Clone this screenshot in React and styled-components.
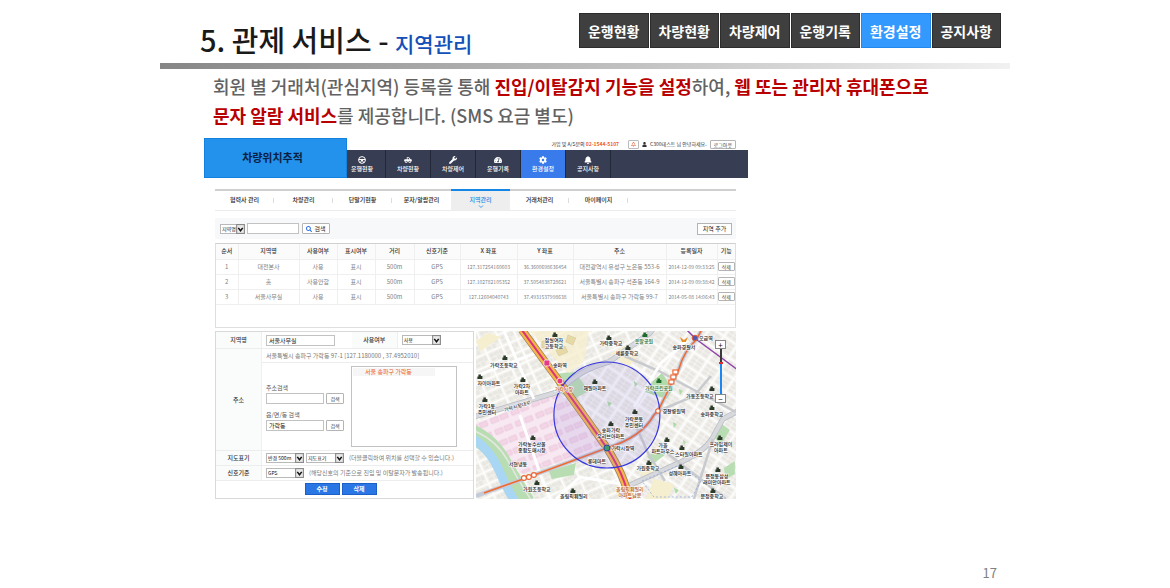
import React from "react";
import styled, { createGlobalStyle } from "styled-components";
import {
  FaBell,
  FaCog,
  FaRegBell,
  FaSearch,
  FaTachometerAlt,
  FaTruckPickup,
  FaUser,
  FaWrench,
} from "react-icons/fa";

const slideMenu = ["운행현황", "차량현황", "차량제어", "운행기록", "환경설정", "공지사항"];

const SteeringWheel = () => (
  <svg viewBox="0 0 16 16" fill="none" stroke="currentColor" strokeWidth="2">
    <circle cx="8" cy="8" r="6.8" />
    <circle cx="8" cy="8" r="1.6" fill="currentColor" />
    <path d="M1.5 7 L8 7 L14.5 7 M8 8 L4.5 13.5 M8 8 L11.5 13.5" />
  </svg>
);

const appMenu = [
  { label: "운행현황", icon: <SteeringWheel /> },
  { label: "차량현황", icon: <FaTruckPickup /> },
  { label: "차량제어", icon: <FaWrench /> },
  { label: "운행기록", icon: <FaTachometerAlt /> },
  { label: "환경설정", icon: <FaCog /> },
  { label: "공지사항", icon: <FaBell /> },
];

const tabs = [
  "협력사 관리",
  "차량관리",
  "단말기현황",
  "문자/알람관리",
  "지역관리",
  "거래처관리",
  "마이페이지",
];

const columns = [
  { label: "순서", width: 22 },
  { label: "지역명", width: 61 },
  { label: "사용여부", width: 38 },
  { label: "표시여부", width: 38 },
  { label: "거리", width: 39 },
  { label: "신호기준", width: 46 },
  { label: "X 좌표", width: 57 },
  { label: "Y 좌표", width: 56 },
  { label: "주소", width: 93 },
  { label: "등록일자", width: 51 },
  { label: "기능", width: 18 },
];

const rows = [
  ["1", "대전본사", "사용", "표시", "500m", "GPS", "127.317254160603", "36.3600698636454", "대전광역시 유성구 노은동 553-6", "2014-12-09 09:33:25"],
  ["2", "홈", "사용안함", "표시", "500m", "GPS", "127.102782105352", "37.5054838728621", "서울특별시 송파구 석촌동 164-9", "2014-12-09 09:38:42"],
  ["3", "서울사무실", "사용", "표시", "500m", "GPS", "127.12604040743", "37.4931537998638", "서울특별시 송파구 가락동 99-7", "2014-05-08 14:06:43"],
];

// coordinates and dates are set smaller than the rest of the row
const smallCells = [6, 7, 9];

const SelectBox = ({ id, label, width, children }) => (
  <SelectWrap $width={width}>
    <select id={id} aria-label={label}>
      {children}
    </select>
    <svg viewBox="0 0 8 9">
      <rect x="0.5" y="0.5" width="7" height="8" fill="#e9e9e9" stroke="#8b8b8b" />
      <path d="M2 3.5 L4 6 L6 3.5" fill="none" stroke="#111" strokeWidth="1.4" />
    </svg>
  </SelectWrap>
);

const places = [
  { x: 78, y: 11, icon: [79, 4], lines: ["잠실여자", "고등학교"] },
  { x: 28, y: 36, icon: [29, 27], lines: ["가락초등학교"] },
  { x: 84, y: 36, lines: ["송파역"] },
  { x: 13, y: 54, icon: [4, 46], lines: ["자이아파트"] },
  { x: 46, y: 57, icon: [47, 49], lines: ["가락2차", "아파트"] },
  { x: 119, y: 59, icon: [119, 51], lines: ["헤밀아파트"] },
  { x: 11, y: 77, icon: [9, 69], lines: ["가락1동", "주민센터"] },
  { x: 135, y: 14, icon: [133, 7], lines: ["가락중학교"] },
  { x: 168, y: 12, icon: [169, 4], lines: ["웃말공원"], color: "#1d6b2b" },
  { x: 151, y: 24, icon: [152, 17], lines: ["세륜중학교"] },
  { x: 208, y: 18, lines: ["송파경찰서"] },
  { x: 230, y: 9, lines: ["오금역"] },
  { x: 183, y: 59, icon: [183, 50], lines: ["가락근린공원"], color: "#1d6b2b" },
  { x: 198, y: 82, lines: ["경찰병원역"] },
  { x: 224, y: 67, icon: [236, 58], lines: ["가동초등학교"] },
  { x: 236, y: 85, icon: [236, 77], lines: ["송파중학교"] },
  { x: 158, y: 90, icon: [159, 81], lines: ["가락본동", "주민센터"] },
  { x: 135, y: 101, icon: [135, 93], lines: ["송파가락", "우리브아파트"] },
  { x: 147, y: 119, lines: ["가락시장역"] },
  { x: 56, y: 115, icon: [57, 107], lines: ["가락농수산물", "종합도매시장"] },
  { x: 42, y: 135, lines: ["서현냉동"] },
  { x: 121, y: 132, lines: ["롯데마트"] },
  { x: 61, y: 160, icon: [61, 152], lines: ["가원초등학교"] },
  { x: 98, y: 167, icon: [97, 160], lines: ["올림픽훼밀리"] },
  { x: 187, y: 116, icon: [191, 109], lines: ["가을", "파트하우스"] },
  { x: 213, y: 125, icon: [206, 117], lines: ["스타일아파트"] },
  { x: 172, y: 139, icon: [173, 132], lines: ["가원중학교"] },
  { x: 204, y: 144, icon: [205, 136], lines: ["성혜아파트"] },
  { x: 245, y: 115, icon: [244, 107], lines: ["프라임제이", "아파트"] },
  { x: 241, y: 147, icon: [242, 139], lines: ["문정동삼성", "래미안아파트"] },
  { x: 236, y: 167, icon: [237, 160], lines: ["문정중학교"] },
  { x: 154, y: 160, lines: ["올림픽훼밀리", "아파트남문"], color: "#b5590e" },
  { x: 88, y: 60, lines: ["가락시장"], color: "#b5590e" },
];

const AreaMap = () => (
  <svg viewBox="0 0 260 168" preserveAspectRatio="xMidYMid slice" role="img" aria-label="지역 지도">
    <defs>
      <pattern id="blocksA" width="17" height="12" patternUnits="userSpaceOnUse" patternTransform="rotate(-24)">
        <rect width="17" height="12" fill="#f3f2ed" />
        <path d="M0 .5H17M.5 0V12" stroke="#fff" strokeWidth="1.6" />
        <path d="M3 3h3v3h-3zM7.5 3h4v2.500h-4zM13 3h2.500v4h-2.500zM3 8h4v2h-4zM9 7.500h3v3h-3z" fill="#ebe9e4" stroke="#dddbd6" strokeWidth=".4" />
      </pattern>
      <pattern id="blocksB" width="16" height="15" patternUnits="userSpaceOnUse" patternTransform="rotate(34)">
        <rect width="16" height="15" fill="#f4f3ef" />
        <path d="M0 .5H16M.5 0V15" stroke="#fff" strokeWidth="1.6" />
        <path d="M3 3h4v2h-4zM9 3h5v2h-5zM3 7h4v2h-4zM9 7h5v2h-5zM3 11h4v2h-4zM9 11h5v2h-5z" fill="#edeae5" stroke="#dedbd6" strokeWidth=".4" />
      </pattern>
      <pattern id="market" width="22" height="12" patternUnits="userSpaceOnUse" patternTransform="rotate(-22)">
        <rect width="22" height="12" fill="#f7e8f1" />
        <path d="M2 3h8v5h-8zM12 3h8v5h-8z" fill="#f3d5e6" stroke="#e2bdd2" strokeWidth=".5" />
      </pattern>
    </defs>
    <rect width="260" height="168" fill="url(#blocksA)" />
    <path d="M128 28 L190 0 H260 V168 H150 L131 117 L100 55z" fill="url(#blocksB)" />
    <path d="M0 92 L84 62 L131 117 L46 143 L0 100z" fill="url(#market)" />
    <path d="M54 0 H113 L108 31 L92 42z" fill="#f6efcf" opacity=".8" />
    <path d="M66 10h5v7h-5zM80 19l9-4 3 6-9 4zM92 4l8 3-3 7-7-3z" fill="#e6d9a6" stroke="#cfc297" strokeWidth=".5" />
    <path d="M135 22 l14 -7 14 8 -11 14z M0 10 l12 -8 13 4 -20 14z M162 140 l16 -8 8 9 -15 8z M178 148 l20 5 -6 15 h-22z" fill="#f6efcf" />

    <path d="M76 43 L99 41 L113 60 L98 68 L84 62z" fill="#b9ddb2" />
    <path d="M177 50 L186 42 L197 58 L191 68 L169 61z" fill="#b2dbab" />
    <path d="M73 140 L100 132 L98 144 L76 148z" fill="#b9ddb2" />
    <path d="M171 125 l12 -6 6 5 -12 9z M237 105 l9 -12 8 6 -9 15z M248 137 l11 -7 v13 l-9 5z" fill="#b9ddb2" />
    <path d="M203 58 l4 2 -3 4z M158 50 l4 3 -3 3z M197 91 l4 2 -3 4z M207 109 l3 2 -2 3z M198 157 l5 2 -3 4z M131 70 l5 2 -3 4z" fill="#addba4" />

    <path d="M-4 103 Q15 112 26 132 T50 172" fill="none" stroke="#b9ddb2" strokeWidth="19" />
    <path d="M-4 107 Q14 118 23 139 T40 172" fill="none" stroke="#a9d6f2" strokeWidth="9" />
    <path d="M-4 99 Q20 108 32 130 T57 172" fill="none" stroke="#e5e7e0" strokeWidth="1.500" />

    <g fill="none" stroke="#b9bcc5" strokeWidth="5.500">
      <path d="M-3 86 L82 61 Q104 38 133 31 L174 2 L178 -3" />
      <path d="M150 156 L205 131 Q229 120 236 108 L247 88 L262 80" />
    </g>
    <g fill="none" stroke="#d8d9dd" strokeWidth="4">
      <path d="M-3 86 L82 61 Q104 38 133 31 L174 2 L178 -3" />
      <path d="M150 156 L205 131 Q229 120 236 108 L247 88 L262 80" />
    </g>
    <g fill="none" stroke="#c8cace" strokeWidth="2.500">
      <path d="M144 23 L183 40 L205 52 L260 81" />
      <path d="M237 108 L218 168" />
      <path d="M192 123 L222 146 L250 168" />
      <path d="M158 90 L172 122 L189 150" />
      <path d="M235 45 L218 65 L183 80" />
    </g>
    <g fill="none" stroke="#fff" strokeWidth="3">
      <path d="M44 84 L65 145 L74 168" />
      <path d="M80 168 L104 146 L151 154" />
      <path d="M0 45 L60 22" />
      <path d="M28 0 L58 68" />
      <path d="M212 9 L185 32 L158 76" />
    </g>
    <path d="M166 150 L204 134 L225 150 L216 166 H178z" fill="none" stroke="#88a4d8" strokeWidth=".7" strokeDasharray="2 2" />

    <path d="M46 -1 L84 51 L112 90 L131 117 Q142 134 148 150 L155 170" fill="none" stroke="#9b7a5b" strokeWidth="8" />
    <path d="M46 -1 L84 51 L112 90 L131 117 Q142 134 148 150 L155 170" fill="none" stroke="#f5b548" strokeWidth="6.500" />
    <path d="M46 -1 L84 51 L112 90 L131 117 Q142 134 148 150 L155 170" fill="none" stroke="#d8327d" strokeWidth="2" />

    <path d="M0 165 L53 146 L131 117 Q166 106 178 84 L182 80 L196 52 L203 38 Q208 20 221 8 L226 -2" fill="none" stroke="#c3cbd9" strokeWidth="4" />
    <path d="M8 162 L53 146 L131 117 Q166 106 178 84 L182 80 L196 52 L203 38 Q208 20 221 8 L226 -2" fill="none" stroke="#f06a32" strokeWidth="1.600" />
    <path d="M211 -1 L220 8 L262 39" fill="none" stroke="#8e44a8" strokeWidth="1.500" />

    <circle cx="131" cy="84" r="53" fill="#8f7ee0" fillOpacity=".15" stroke="#3838df" strokeWidth="1.200" />

    <g fill="#fff" stroke="#ee6430" strokeWidth="1.100">
      <circle cx="48" cy="147" r="2.400" />
      <circle cx="53" cy="146" r="2.400" />
      <circle cx="58" cy="144" r="2.400" />
      <rect x="193" y="49" width="5" height="4" />
      <rect x="195" y="44" width="5" height="4" />
      <rect x="197" y="39" width="5" height="4" />
      <circle cx="182" cy="80" r="2.200" />
    </g>
    <g fill="#e53b86" stroke="#fff" strokeWidth=".8">
      <rect x="68" y="29" width="6" height="6" rx="1.500" />
      <circle cx="84" cy="50" r="3" />
    </g>
    <circle cx="219" cy="7" r="2.800" fill="#4b59b5" stroke="#e25b35" />
    <circle cx="131" cy="117" r="3" fill="#3f9a6a" stroke="#2848a8" />
    <path d="M204 6 l4 3 4 -3 -2 5 h-4z" fill="#e8902a" />

    {places.map((place, i) => (
      <g key={i}>
        {place.icon && (
          <path
            transform={`translate(${place.icon[0]} ${place.icon[1]})`}
            d="M-2.500 2 V-.5 H-1.500 V-2.500 H1 V-1 H2.500 V2z"
            fill={place.color || "#2c3a2a"}
          />
        )}
        <MapLabel x={place.x} y={place.y} fill={place.color || "#222"}>
          {place.lines.map((line, n) => (
            <tspan key={line} x={place.x} dy={n ? 6 : 0}>
              {line}
            </tspan>
          ))}
        </MapLabel>
      </g>
    ))}
    <MapLabel x="42" y="77" fill="#444" transform="rotate(-17 42 77)">
      가락시장대로
    </MapLabel>
  </svg>
);

const App = () => {
  return (
    <Slide>
      <GlobalStyle />
      <SlideHeader>
        <SlideTitle>
          5. 관제 서비스 - <span>지역관리</span>
        </SlideTitle>
        <SlideNav>
          {slideMenu.map((item) => (
            <SlideLink href="#" key={item} $active={item === "환경설정"}>
              {item}
            </SlideLink>
          ))}
        </SlideNav>
      </SlideHeader>
      <Rule />
      <Summary>
        회원 별 거래처(관심지역) 등록을 통해 <strong>진입/이탈감지 기능을 설정</strong>하여,{" "}
        <strong>웹 또는 관리자 휴대폰으로</strong>
        <br />
        <strong>문자 알람 서비스</strong>를 제공합니다. (SMS 요금 별도)
      </Summary>

      <Screen>
        <TopBar>
          <Brand>차량위치추적</Brand>
          <TopRight>
            <Utility>
              <span>
                가입 및 A/S문의 <b>02-1544-5107</b>
              </span>
              <BellButton aria-label="알림">
                <FaRegBell />
              </BellButton>
              <FaUser />
              <span>C300테스트 님 안녕하세요.</span>
              <SmallButton>로그아웃</SmallButton>
            </Utility>
            <MainNav>
              {appMenu.map((item) => (
                <MainLink href="#" key={item.label} $active={item.label === "환경설정"}>
                  {item.icon}
                  {item.label}
                </MainLink>
              ))}
            </MainNav>
          </TopRight>
        </TopBar>

        <Content>
          <Tabs>
            {tabs.map((tab) => (
              <Tab href="#" key={tab} $active={tab === "지역관리"}>
                {tab}
                {tab === "지역관리" && (
                  <svg viewBox="0 0 6 3">
                    <path d="M1 .5 L3 2.500 L5 .5" fill="none" stroke="currentColor" strokeWidth=".8" />
                  </svg>
                )}
              </Tab>
            ))}
          </Tabs>

          <SearchBar>
            <SelectBox label="검색 조건" width={25}>
              <option>지역명</option>
            </SelectBox>
            <TextInput aria-label="검색어" $width={52} />
            <SearchButton>
              <FaSearch />
              검색
            </SearchButton>
            <AddButton>지역 추가</AddButton>
          </SearchBar>

          <TableBox>
            <Table>
              <colgroup>
                {columns.map((col) => (
                  <Col key={col.label} $width={col.width} />
                ))}
              </colgroup>
              <thead>
                <tr>
                  {columns.map((col) => (
                    <th key={col.label}>{col.label}</th>
                  ))}
                </tr>
              </thead>
              <tbody>
                {rows.map((row) => (
                  <tr key={row[0]}>
                    {row.map((cell, i) => (
                      <Cell key={i} $small={smallCells.includes(i)}>
                        {cell}
                      </Cell>
                    ))}
                    <Cell>
                      <SmallButton>삭제</SmallButton>
                    </Cell>
                  </tr>
                ))}
              </tbody>
            </Table>
          </TableBox>

          <Lower>
            <Form onSubmit={(e) => e.preventDefault()}>
              <FormRow $height={17}>
                <FormLabel htmlFor="areaName">지역명</FormLabel>
                <Field $grow={6}>
                  <TextInput id="areaName" defaultValue="서울사무실" $width={69} />
                </Field>
                <FormLabel htmlFor="areaUse">사용여부</FormLabel>
                <Field $grow={5}>
                  <SelectBox id="areaUse" width={39}>
                    <option>사용</option>
                  </SelectBox>
                </Field>
              </FormRow>
              <FormRow $height={102}>
                <FormLabel as="span">주소</FormLabel>
                <AddressField>
                  <Address>서울특별시 송파구 가락동 97-1 [127.1180000 , 37.4952010]</Address>
                  <AddressBody>
                    <AddressSearch>
                      <label htmlFor="addressWord">주소검색</label>
                      <Inline>
                        <TextInput id="addressWord" $width={58} />
                        <SmallButton>검색</SmallButton>
                      </Inline>
                      <label htmlFor="dongWord">읍/면/동 검색</label>
                      <Inline>
                        <TextInput id="dongWord" defaultValue="가락동" $width={58} />
                        <SmallButton>검색</SmallButton>
                      </Inline>
                    </AddressSearch>
                    <Results>
                      <li>서울 송파구 가락동</li>
                    </Results>
                  </AddressBody>
                </AddressField>
              </FormRow>
              <FormRow $height={15}>
                <FormLabel htmlFor="radius">지도표기</FormLabel>
                <Field>
                  <SelectBox id="radius" width={38}>
                    <option>반경 500m</option>
                  </SelectBox>
                  <SelectBox label="지도 표기 방식" width={38}>
                    <option>지도표기</option>
                  </SelectBox>
                  <Hint>(더블클릭하여 위치를 선택할 수 있습니다.)</Hint>
                </Field>
              </FormRow>
              <FormRow $height={15}>
                <FormLabel htmlFor="signal">신호기준</FormLabel>
                <Field>
                  <SelectBox id="signal" width={38}>
                    <option>GPS</option>
                  </SelectBox>
                  <Hint>(해당신호의 기준으로 진입 및 이탈문자가 발송됩니다.)</Hint>
                </Field>
              </FormRow>
              <Actions>
                <ActionButton>수정</ActionButton>
                <ActionButton>삭제</ActionButton>
              </Actions>
            </Form>
            <MapPanel>
              <AreaMap />
              <ZoomControl>
                <button aria-label="확대">+</button>
                <input type="range" aria-label="지도 배율" min="0" max="10" defaultValue="7" />
                <button aria-label="축소">−</button>
              </ZoomControl>
            </MapPanel>
          </Lower>
        </Content>
      </Screen>
      <PageNumber>17</PageNumber>
    </Slide>
  );
};

const GlobalStyle = createGlobalStyle`
  * {
    box-sizing: border-box;
  }
  body {
    margin: 0;
    background: #fff;
    color: #333;
    font-family: "Noto Sans CJK KR", "Liberation Sans", sans-serif;
  }
  button, input, select {
    margin: 0;
    font-family: inherit;
  }
  a {
    text-decoration: none;
  }
`;

const Slide = styled.main`
  display: flex;
  flex-direction: column;
  max-width: 850px;
  min-height: 100vh;
  margin: 0 auto;
`;

const SlideHeader = styled.header`
  display: flex;
  justify-content: space-between;
  align-items: flex-start;
  padding: 13px 9px 0 40px;
  height: 63px;
`;

const SlideTitle = styled.h1`
  margin: 6px 0 0;
  font-size: 29px;
  line-height: 40px;
  font-weight: 500;
  color: #1a1a1a;
  white-space: nowrap;

  span {
    font-size: 21px;
    color: #1450b8;
  }
`;

const SlideNav = styled.nav`
  display: flex;
  gap: 1px;
  width: 422px;
`;

const SlideLink = styled.a`
  flex: 1;
  height: 35px;
  border: 1px solid ${(props) => (props.$active ? "#2388ee" : "#2c2c2c")};
  background: ${(props) => (props.$active ? "#3399ff" : "#3f3f3f")};
  color: #fff;
  font-size: 14px;
  font-weight: 700;
  line-height: 34px;
  text-align: center;
`;

const Rule = styled.div`
  height: 6px;
  background: linear-gradient(to right, #868686, #f1f1f1);
`;

const Summary = styled.p`
  margin: 3px 0 0;
  padding-left: 53px;
  font-size: 18px;
  line-height: 29px;
  font-weight: 500;
  color: #626262;

  strong {
    font-weight: 700;
    color: #b80000;
  }
`;

const Screen = styled.section`
  width: 64%;
  margin: 8px 0 0 44px;
  font-size: 6px;
  line-height: 8px;
`;

const TopBar = styled.div`
  display: flex;
  height: 40px;
`;

const Brand = styled.h2`
  width: 143px;
  margin: 0;
  border: 1px solid #1482dc;
  background: #2392ec;
  color: #0b1f45;
  font-size: 11px;
  line-height: 36px;
  font-weight: 700;
  text-align: center;
  padding-right: 6px;
`;

const TopRight = styled.div`
  flex: 1;
  display: flex;
  flex-direction: column;
`;

const Utility = styled.div`
  display: flex;
  justify-content: flex-end;
  align-items: center;
  gap: 3px;
  height: 12px;
  padding-right: 12px;
  color: #333;
  font-size: 5px;

  b {
    color: #ee5a1c;
  }
  svg {
    width: 5px;
    height: 5px;
  }
`;

const BellButton = styled.button`
  display: flex;
  justify-content: center;
  align-items: center;
  width: 11px;
  height: 9px;
  margin-left: 6px;
  padding: 0;
  border: 1px solid #bbb;
  border-radius: 1px;
  background: #fff;
  color: #e4572c;
`;

const SmallButton = styled.button`
  display: inline-block;
  height: 9px;
  padding: 0 3px;
  border: 1px solid #b4b4b4;
  border-radius: 1px;
  background: #fff;
  color: #444;
  font-size: 5px;
  line-height: 7px;
  white-space: nowrap;
`;

const MainNav = styled.nav`
  display: flex;
  flex: 1;
  background: #373d52;
`;

const MainLink = styled.a`
  display: flex;
  flex-direction: column;
  align-items: center;
  width: 45px;
  padding-top: 6px;
  border-right: 1px solid #232838;
  background: ${(props) => (props.$active ? "#3a7bec" : "#373d52")};
  color: #fff;
  font-weight: 500;

  &:first-child {
    width: 39px;
    padding-right: 8px;
  }
  svg {
    width: 8px;
    height: 8px;
    margin-bottom: 1px;
  }
`;

const Content = styled.div`
  padding: 11px 12px 0 11px;
`;

const Tabs = styled.nav`
  display: flex;
  height: 22px;
  border-top: 2px solid #cfcfcf;
  border-bottom: 1px solid #ececec;
`;

const Tab = styled.a`
  position: relative;
  width: 59px;
  margin-top: -2px;
  padding-top: 5px;
  border-top: 2px solid ${(props) => (props.$active ? "#1486e6" : "#cfcfcf")};
  background: ${(props) => (props.$active ? "#eeeeee" : "#fff")};
  color: ${(props) => (props.$active ? "#1486e6" : "#222")};
  font-weight: 500;
  text-align: center;

  svg {
    position: absolute;
    left: 27px;
    bottom: 2px;
    width: 6px;
    height: 3px;
  }
  &:not(:nth-child(4)):not(:nth-child(5))::after {
    content: "";
    position: absolute;
    right: 0;
    top: 7px;
    width: 1px;
    height: 5px;
    background: #dcdcdc;
  }
`;

const SearchBar = styled.div`
  display: flex;
  align-items: center;
  gap: 2px;
  height: 21px;
  margin-top: 7px;
  padding: 0 4px 0 5px;
  background: #f6f8f9;
`;

const SelectWrap = styled.span`
  position: relative;
  display: inline-flex;
  width: ${(props) => props.$width}px;
  height: 10px;

  select {
    appearance: none;
    width: 100%;
    padding: 0 8px 0 1px;
    border: 1px solid #b9b9b9;
    border-radius: 0;
    background: #fff;
    color: #111;
    font-size: 5px;
    line-height: 8px;
  }
  svg {
    position: absolute;
    right: 0;
    top: 0;
    width: 9px;
    height: 10px;
    pointer-events: none;
  }
`;

const TextInput = styled.input`
  width: ${(props) => props.$width}px;
  height: 11px;
  padding: 0 2px;
  border: 1px solid #c2c2c2;
  background: #fff;
  color: #111;
  font-size: 6px;
`;

const SearchButton = styled.button`
  display: flex;
  justify-content: center;
  align-items: center;
  gap: 2px;
  width: 28px;
  height: 11px;
  padding: 0;
  margin-left: 1px;
  border: 1px solid #b4b4b4;
  border-radius: 1px;
  background: #fff;
  color: #222;
  font-size: 6px;

  svg {
    width: 6px;
    height: 6px;
    color: #2668e8;
  }
`;

const AddButton = styled.button`
  width: 35px;
  height: 12px;
  margin-left: auto;
  padding: 0;
  border: 1px solid #b4b4b4;
  background: #fff;
  color: #222;
  font-size: 6px;
  line-height: 8px;
`;

const TableBox = styled.div`
  min-height: 85px;
  margin-top: 4px;
  border: 1px solid #dfdfdf;
  border-top: 1px solid #d0d0d0;
`;

const Table = styled.table`
  width: 100%;
  border-collapse: collapse;
  table-layout: fixed;

  th, td {
    height: 15px;
    padding: 0;
    border-right: 1px solid #efefef;
    border-bottom: 1px solid #efefef;
    text-align: center;
    white-space: nowrap;
  }
  th:last-child, td:last-child {
    border-right: 0;
  }
  th {
    background: #fbfbfb;
    color: #333;
    font-weight: 500;
  }
`;

const Cell = styled.td`
  color: #808080;
  font-size: ${(props) => (props.$small ? 5 : 6)}px;
`;

const Col = styled.col`
  width: ${(props) => props.$width}px;
`;

const Lower = styled.div`
  display: flex;
  gap: 2px;
  margin-top: 3px;
`;

const Form = styled.form`
  flex: 99 1 0;
  min-width: 0;
  border: 1px solid #d9d9d9;
`;

const FormRow = styled.div`
  display: flex;
  min-height: ${(props) => props.$height}px;
  border-bottom: 1px solid #ededed;
`;

const FormLabel = styled.label`
  display: flex;
  flex: none;
  justify-content: center;
  align-items: center;
  width: 46px;
  background: #fafbfb;
  border-right: 1px solid #efefef;
  color: #333;
  font-weight: 500;
`;

const Field = styled.div`
  display: flex;
  flex: ${(props) => props.$grow || 1} 1 0;
  min-width: 0;
  align-items: center;
  gap: 2px;
  padding-left: 4px;
`;

const Hint = styled.span`
  margin-left: 3px;
  color: #777;
  white-space: nowrap;
`;

const AddressField = styled.div`
  flex: 1;
`;

const Address = styled.div`
  height: 14px;
  padding: 3px 0 0 4px;
  border-bottom: 1px solid #ededed;
  color: #777;
`;

const AddressBody = styled.div`
  display: flex;
  gap: 7px;
  padding: 3px 16px 2px 4px;
`;

const AddressSearch = styled.div`
  width: 78px;
  padding-top: 18px;
  color: #555;
`;

const Inline = styled.div`
  display: flex;
  align-items: center;
  gap: 2px;
  height: 12px;
  margin-bottom: 7px;

  ${SmallButton} {
    width: 18px;
    height: 11px;
  }
`;

const Results = styled.ul`
  flex: 1;
  height: 81px;
  margin: 0;
  padding: 1px;
  border: 1px solid #c2c2c2;
  list-style: none;
  color: #ee5a1c;

  li {
    width: 80%;
    padding-left: 12px;
    background: #f6f6f6;
  }
`;

const Actions = styled.div`
  display: flex;
  justify-content: center;
  gap: 2px;
  padding-top: 2px;
  padding-right: 8px;
`;

const ActionButton = styled.button`
  width: 35px;
  height: 12px;
  padding: 0;
  border: 1px solid #1b60c8;
  background: #2a76e4;
  color: #fff;
  font-size: 6px;
  font-weight: 700;
  line-height: 8px;
`;

const MapPanel = styled.div`
  position: relative;
  flex: 100 1 0;
  min-width: 0;
  height: 168px;
  overflow: hidden;

  > svg {
    display: block;
    width: 100%;
    height: 100%;
  }
`;

const MapLabel = styled.text`
  font-size: 5px;
  font-weight: 500;
  text-anchor: middle;
  paint-order: stroke;
  stroke: #fff;
  stroke-width: 1px;
`;

const ZoomControl = styled.div`
  position: absolute;
  top: 9px;
  right: 10px;
  display: flex;
  flex-direction: column;
  align-items: center;

  button {
    width: 11px;
    height: 9px;
    padding: 0;
    border: 1px solid #888;
    background: #fff;
    color: #111;
    font-size: 8px;
    line-height: 6px;
  }
  input {
    appearance: none;
    writing-mode: vertical-lr;
    direction: rtl;
    width: 2px;
    height: 45px;
    background: linear-gradient(#3a3a3a 30%, #1c86f2 30%);
  }
  input::-webkit-slider-thumb {
    appearance: none;
    width: 4px;
    height: 2px;
    background: #e02b2b;
  }
`;

const PageNumber = styled.footer`
  margin-top: auto;
  padding: 0 13px 5px 0;
  color: #808080;
  font-size: 13px;
  line-height: 20px;
  text-align: right;
`;

export default App;
